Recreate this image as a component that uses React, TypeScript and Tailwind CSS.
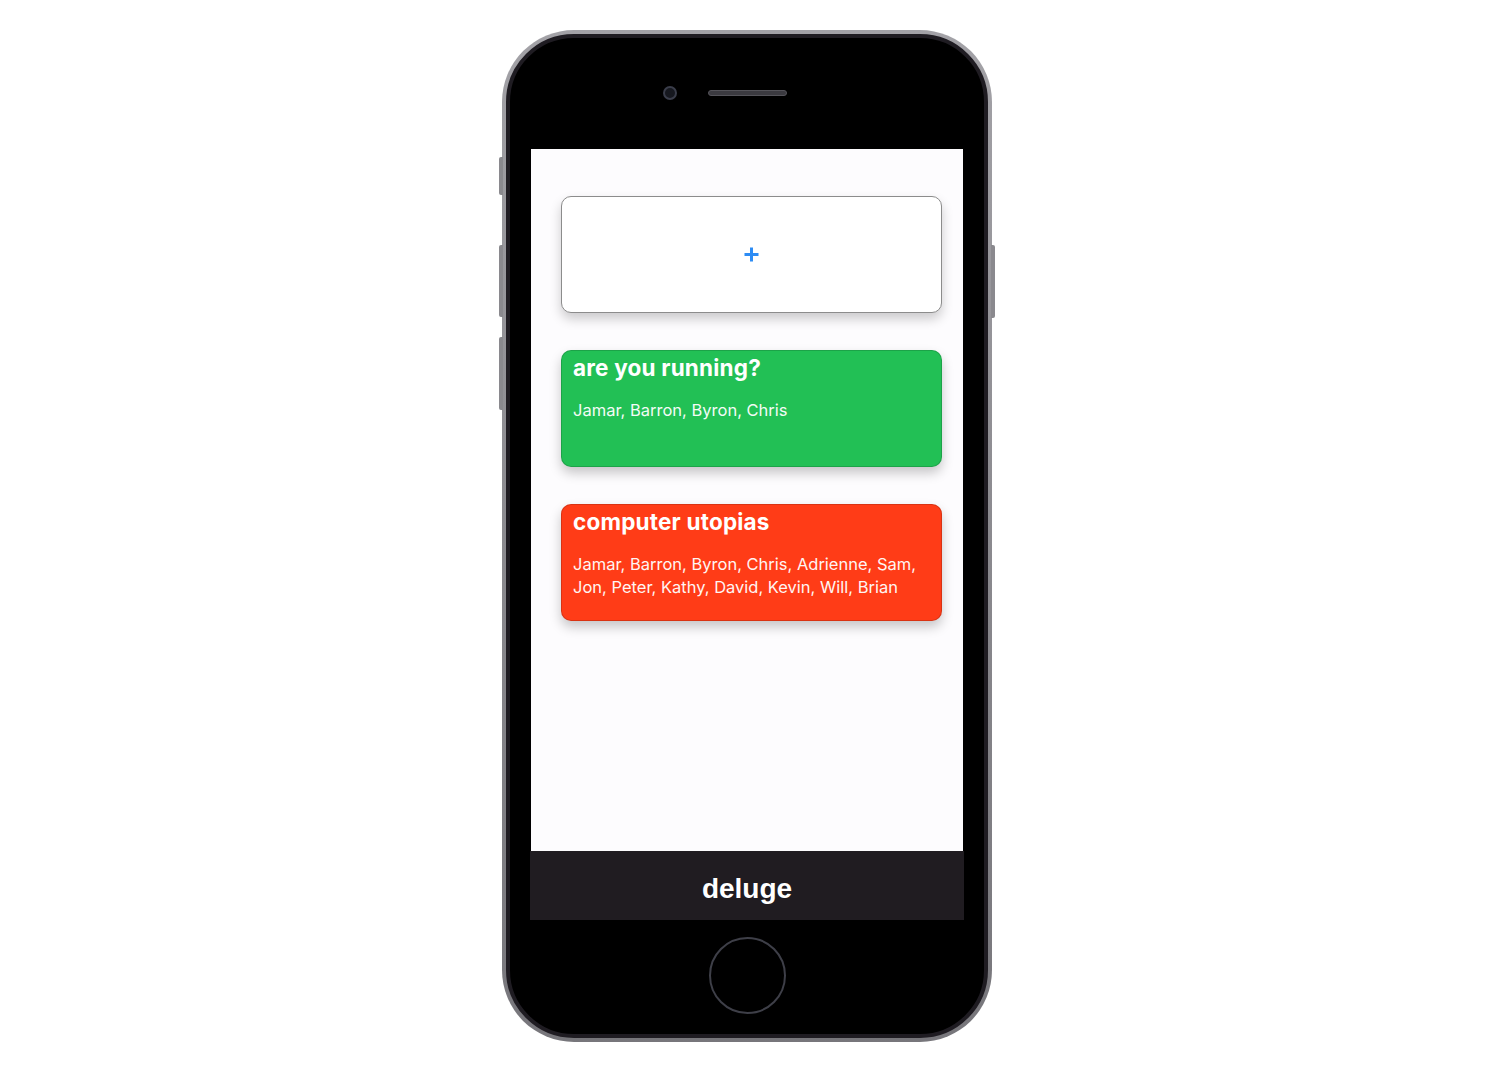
import React from "react";

const Card = ({ color, title, names }: { color: string; title: string; names: string }) => (
  <div
    className={`h-[117px] w-[381px] rounded-[10px] border border-black/15 px-[11px] pt-[2px] text-white shadow-[0_6px_12px_rgba(0,0,0,0.22)] ${color}`}
  >
    <div className="text-[22.5px] font-bold leading-[30px] tracking-[0.2px]">{title}</div>
    <div className="mt-[16px] text-[16.5px] leading-[23px] opacity-95">{names}</div>
  </div>
);

export default function App() {
  return (
    <div className="min-h-[1071px] w-full bg-white pt-[30px]" style={{ fontFamily: "Inter, 'Noto Sans', sans-serif" }}>
      <div className="relative ml-[502px] h-[1012px] w-[490px]">
        {/* side buttons */}
        <div className="absolute left-[-3px] top-[127px] h-[38px] w-[4px] rounded-l-[2px] bg-[#8a898e]" />
        <div className="absolute left-[-3px] top-[215px] h-[72px] w-[4px] rounded-l-[2px] bg-[#8a898e]" />
        <div className="absolute left-[-3px] top-[307px] h-[73px] w-[4px] rounded-l-[2px] bg-[#8a898e]" />
        <div className="absolute right-[-3px] top-[215px] h-[73px] w-[4px] rounded-r-[2px] bg-[#8a898e]" />
        <div className="h-full w-full rounded-[72px] bg-gradient-to-b from-[#a3a2a7] via-[#8b8a8f] to-[#77767b] p-[4px]">
          <div className="flex h-full w-full flex-col items-center rounded-[68px] border-[4px] border-[#1f1c22] bg-black">
            {/* top */}
            <div className="flex h-[111px] w-full items-start pl-[153px] pt-[48px]">
              <div className="h-[14px] w-[14px] rounded-full border-2 border-[#3a3d4a] bg-[#16181f]" />
              <div className="ml-[31px] mt-[4px] h-[6px] w-[79px] rounded-full border border-[#55545a] bg-[#3b3a40]" />
            </div>
            {/* screen */}
            <div className="flex h-[702px] w-[432px] flex-col gap-[37px] bg-[#fdfcfe] pl-[30px] pt-[47px]">
              <div className="flex h-[117px] w-[381px] items-center justify-center rounded-[10px] border-[1.5px] border-[#8c8c8c] bg-white shadow-[0_6px_12px_rgba(0,0,0,0.2)]">
                <svg width="17" height="17" viewBox="0 0 17 17">
                  <path d="M8.5 1.5v14M1.5 8.5h14" stroke="#2d8cf4" strokeWidth="3" />
                </svg>
              </div>
              <Card color="bg-[#22c055]" title="are you running?" names="Jamar, Barron, Byron, Chris" />
              <Card
                color="bg-[#ff3c17]"
                title="computer utopias"
                names="Jamar, Barron, Byron, Chris, Adrienne, Sam, Jon, Peter, Kathy, David, Kevin, Will, Brian"
              />
            </div>
            {/* bottom bar */}
            <div
              className="flex h-[69px] w-[434px] items-center justify-center bg-[#201c21] pt-[7px] text-[28px] font-bold text-white"
              style={{ fontFamily: "'Liberation Sans', Arial, sans-serif" }}
            >
              deluge
            </div>
            {/* home button */}
            <div className="mt-[17px] h-[77px] w-[77px] rounded-full border-2 border-[#3e3f48]" />
          </div>
        </div>
      </div>
    </div>
  );
}
